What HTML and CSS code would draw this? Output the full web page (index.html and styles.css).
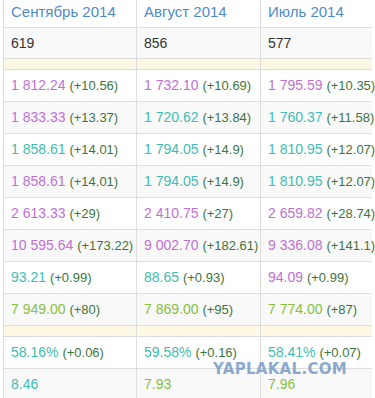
FILE: index.html
```html
<!DOCTYPE html>
<html>
<head>
<meta charset="utf-8">
<link rel="stylesheet" href="styles.css">
</head>
<body>
<div class="wrap">
<table class="stats">
  <colgroup><col class="c1"><col class="c2"><col class="c3"></colgroup>
  <thead>
    <tr><th>Сентябрь 2014</th><th>Август 2014</th><th>Июль 2014</th></tr>
  </thead>
  <tbody>
    <tr class="gray"><td class="plain">619</td><td class="plain">856</td><td class="plain">577</td></tr>
    <tr class="sep"><td></td><td></td><td></td></tr>
    <tr><td><span class="pu">1 812.24</span> <small>(+10.56)</small></td><td><span class="pu">1 732.10</span> <small>(+10.69)</small></td><td><span class="pu">1 795.59</span> <small>(+10.35)</small></td></tr>
    <tr class="gray"><td><span class="pu">1 833.33</span> <small>(+13.37)</small></td><td><span class="te">1 720.62</span> <small>(+13.84)</small></td><td><span class="te">1 760.37</span> <small>(+11.58)</small></td></tr>
    <tr><td><span class="te">1 858.61</span> <small>(+14.01)</small></td><td><span class="te">1 794.05</span> <small>(+14.9)</small></td><td><span class="te">1 810.95</span> <small>(+12.07)</small></td></tr>
    <tr class="gray"><td><span class="pu">1 858.61</span> <small>(+14.01)</small></td><td><span class="te">1 794.05</span> <small>(+14.9)</small></td><td><span class="te">1 810.95</span> <small>(+12.07)</small></td></tr>
    <tr><td><span class="pu">2 613.33</span> <small>(+29)</small></td><td><span class="pu">2 410.75</span> <small>(+27)</small></td><td><span class="pu">2 659.82</span> <small>(+28.74)</small></td></tr>
    <tr class="gray"><td><span class="pu">10 595.64</span> <small>(+173.22)</small></td><td><span class="pu">9 002.70</span> <small>(+182.61)</small></td><td><span class="pu">9 336.08</span> <small>(+141.1)</small></td></tr>
    <tr><td><span class="te">93.21</span> <small>(+0.99)</small></td><td><span class="te">88.65</span> <small>(+0.93)</small></td><td><span class="pu">94.09</span> <small>(+0.99)</small></td></tr>
    <tr class="gray"><td><span class="gr">7 949.00</span> <small>(+80)</small></td><td><span class="gr">7 869.00</span> <small>(+95)</small></td><td><span class="gr">7 774.00</span> <small>(+87)</small></td></tr>
    <tr class="sep"><td></td><td></td><td></td></tr>
    <tr><td><span class="te">58.16%</span> <small>(+0.06)</small></td><td><span class="te">59.58%</span> <small>(+0.16)</small></td><td><span class="te">58.41%</span> <small>(+0.07)</small></td></tr>
    <tr class="gray last"><td><span class="te">8.46</span></td><td><span class="gr">7.93</span></td><td><span class="gr">7.96</span></td></tr>
  </tbody>
</table>
<div class="watermark">YAPLAKAL.COM</div>
</div>
</body>
</html>
```
FILE: styles.css
```css
html, body {
  margin: 0;
  padding: 0;
  background: #fff;
}
.wrap {
  position: relative;
  width: 375px;
  height: 398px;
  overflow: hidden;
}
.stats {
  margin-left: 3px;
  width: 369px;
  table-layout: fixed;
  border-collapse: separate;
  border-spacing: 0;
  font-family: Arial, "Liberation Sans", sans-serif;
  font-size: 14px;
  color: #333;
}
.c1 { width: 133px; }
.c2 { width: 124px; }
.c3 { width: 112px; }
.stats th {
  text-align: left;
  font-weight: normal;
  font-size: 15px;
  color: #4f8bc9;
  line-height: 20px;
  padding: 2px 6px 5px 7px;
  border-left: 1px solid #ddd;
  white-space: nowrap;
}
.stats td {
  line-height: 16px;
  padding: 7px 0 7px 7px;
  border-left: 1px solid #ddd;
  border-top: 1px solid #ddd;
  white-space: nowrap;
  overflow: visible;
}
.stats tr.gray td { background: #f9f9f9; }
.stats tr.last td { border-bottom: 1px solid #ddd; }
.stats tr.sep td {
  height: 10px;
  padding: 0;
  line-height: 0;
  background: #fcf8e3;
}
.plain { color: #333; }
.pu { color: #c070d4; }
.te { color: #3dbdb3; }
.gr { color: #85c240; }
small {
  font-size: 13px;
  color: #3c763d;
}
.watermark {
  position: absolute;
  left: 213px;
  top: 359px;
  font-family: "DejaVu Sans", sans-serif;
  font-weight: bold;
  font-size: 15px;
  letter-spacing: 0.3px;
  color: #7b9bc6;
  opacity: 0.85;
  line-height: 20px;
}
```
